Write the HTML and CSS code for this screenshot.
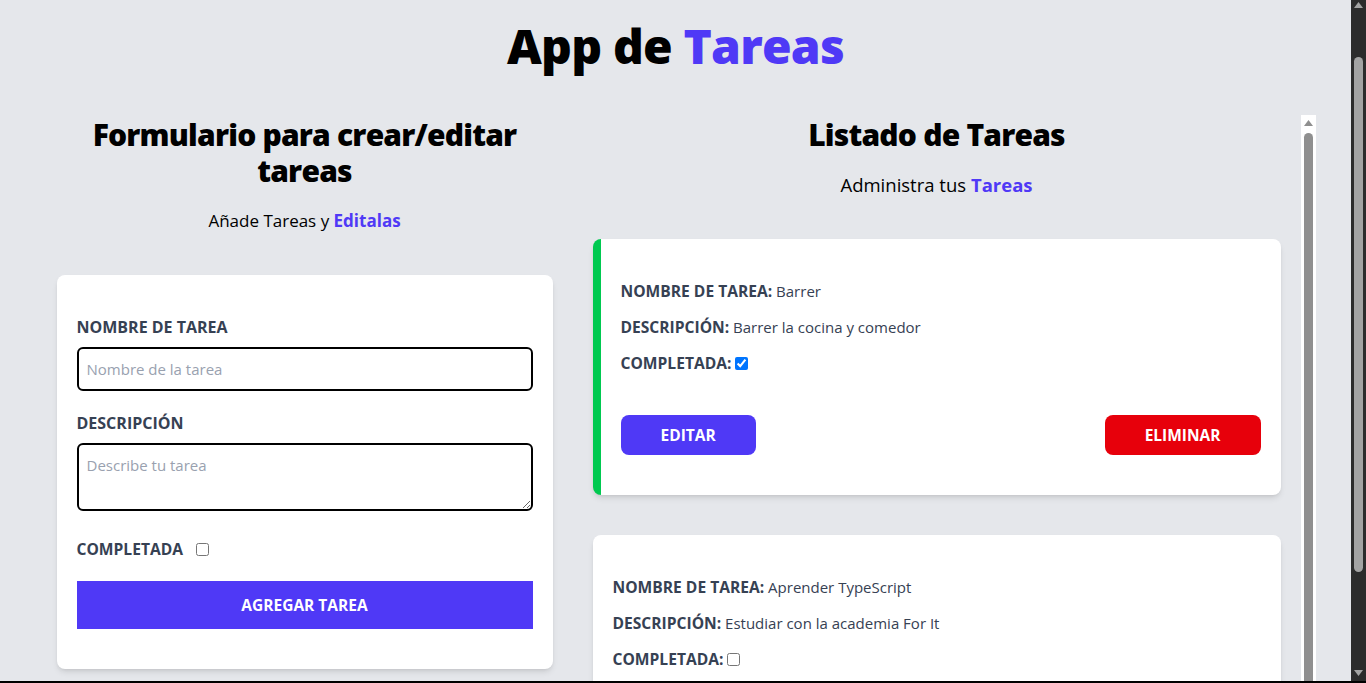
FILE: index.html
```html
<!DOCTYPE html>
<html lang="es">
<head>
<meta charset="utf-8">
<title>App de Tareas</title>
<link rel="stylesheet" href="styles.css">
</head>
<body>
<h1 class="title">App de <span class="accent">Tareas</span></h1>
<main class="layout">
  <section class="form-col">
    <h2 class="col-title">Formulario para crear/editar tareas</h2>
    <p class="col-sub">Añade Tareas y <span class="accent-bold">Editalas</span></p>
    <form class="card form-card">
      <div class="field">
        <label class="field-label" for="nombre">Nombre de tarea</label>
        <input class="field-input" id="nombre" type="text" placeholder="Nombre de la tarea">
      </div>
      <div class="field">
        <label class="field-label" for="descripcion">Descripción</label>
        <textarea class="field-textarea" id="descripcion" rows="2" placeholder="Describe tu tarea"></textarea>
      </div>
      <div class="field check-field">
        <label class="field-label inline" for="completada">Completada</label>
        <input class="check" id="completada" type="checkbox">
      </div>
      <button class="submit" type="button">Agregar tarea</button>
    </form>
  </section>
  <div class="list-wrap">
    <section class="list-col">
      <h2 class="col-title">Listado de Tareas</h2>
      <p class="col-sub col-sub-list">Administra tus <span class="accent-bold">Tareas</span></p>
      <article class="task-card done">
        <p class="task-line"><strong>Nombre de tarea:</strong> Barrer</p>
        <p class="task-line"><strong>Descripción:</strong> Barrer la cocina y comedor</p>
        <p class="task-line"><strong>Completada:</strong><input class="check" type="checkbox" checked></p>
        <div class="task-actions">
          <button class="btn btn-edit" type="button">Editar</button>
          <button class="btn btn-delete" type="button">Eliminar</button>
        </div>
      </article>
      <article class="task-card">
        <p class="task-line"><strong>Nombre de tarea:</strong> Aprender TypeScript</p>
        <p class="task-line"><strong>Descripción:</strong> Estudiar con la academia For It</p>
        <p class="task-line"><strong>Completada:</strong><input class="check" type="checkbox"></p>
        <div class="task-actions">
          <button class="btn btn-edit" type="button">Editar</button>
          <button class="btn btn-delete" type="button">Eliminar</button>
        </div>
      </article>
    </section>
    <div class="inner-scrollbar" aria-hidden="true">
      <svg class="inner-arrow" width="9" height="6" viewBox="0 0 9 6"><polygon points="4.5,0 9,6 0,6" fill="#8f8f8f"/></svg>
      <div class="inner-thumb"></div>
    </div>
  </div>
</main>
<div class="page-scrollbar" aria-hidden="true">
  <svg class="page-arrow up" width="9" height="6" viewBox="0 0 9 6"><polygon points="4.5,0 9,6 0,6" fill="#a3a3a3"/></svg>
  <div class="page-thumb"></div>
  <svg class="page-arrow down" width="9" height="6" viewBox="0 0 9 6"><polygon points="0,0 9,0 4.5,6" fill="#a3a3a3"/></svg>
</div>
<div class="frame-edge" aria-hidden="true"></div>
</body>
</html>
```
FILE: styles.css
```css
* { box-sizing: border-box; }

html { margin: 0; }

body {
  margin: 0 15px 0 0;
  background: #e5e7eb;
  color: #000;
  font-family: "Open Sans", "Noto Sans", sans-serif;
  font-size: 15px;
  line-height: 24px;
  padding-bottom: 10px;
}

.title {
  margin: 22px 0 0;
  padding-bottom: 1px;
  font-family: "Open Sans", sans-serif;
  font-size: 48px;
  line-height: 48px;
  font-weight: 800;
  letter-spacing: -0.8px;
  text-align: center;
}

.accent { color: #4f39f6; }
.accent-bold { color: #4f39f6; font-weight: 700; }

.layout {
  display: flex;
  width: 1280px;
  margin: 44px auto 0;
  padding-left: 21px;
}

.form-col {
  flex: 0 0 496px;
}

.list-wrap {
  flex: 1 1 auto;
  position: relative;
}

.list-col {
  height: 683px;
  overflow-y: auto;
  padding: 0 35px 0 40px;
}

.col-title {
  margin: 2px 0 0;
  font-family: "Open Sans", sans-serif;
  font-size: 30px;
  line-height: 36px;
  font-weight: 800;
  letter-spacing: -0.8px;
  text-align: center;
}

.col-sub {
  margin: 18px 0 40px;
  font-size: 17px;
  line-height: 28px;
  text-align: center;
}

.col-sub-list {
  font-size: 18.5px;
}

.card {
  background: #fff;
  border-radius: 8px;
  box-shadow: 0 4px 6px -1px rgba(0,0,0,.1), 0 2px 4px -2px rgba(0,0,0,.1);
}

.form-card {
  padding: 40px 20px;
}

.field { margin-bottom: 20px; }

.field-label {
  display: block;
  margin-bottom: 8px;
  color: #364153;
  font-size: 16px;
  font-weight: 700;
  text-transform: uppercase;
}

.field-label.inline {
  display: inline-block;
  margin: 0 9px 0 0;
  font-size: 15.6px;
}

.check-field {
  display: flex;
  align-items: center;
  padding-top: 6px;
}

.field-input,
.field-textarea {
  display: block;
  width: 100%;
  border: 2px solid #000;
  border-radius: 6px;
  padding: 8px;
  font-family: inherit;
  font-size: 15px;
  line-height: 24px;
  color: #000;
  background: #fff;
}

.field-input { height: 44px; }

.field-textarea {
  height: 68px;
  resize: vertical;
}

.field-input::placeholder,
.field-textarea::placeholder { color: #99a1af; }

.check {
  width: 13px;
  height: 13px;
  margin: 0 0 0 4px;
  vertical-align: -1px;
}

.submit {
  display: block;
  width: 100%;
  border: 0;
  padding: 12px;
  background: #4f39f6;
  color: #fff;
  font-family: inherit;
  font-size: 15.5px;
  line-height: 24px;
  font-weight: 700;
  text-transform: uppercase;
}

.task-card {
  background: #fff;
  border-radius: 8px;
  box-shadow: 0 4px 6px -1px rgba(0,0,0,.1), 0 2px 4px -2px rgba(0,0,0,.1);
  padding: 40px 20px;
  margin-bottom: 40px;
}

.task-card.done { border-left: 8px solid #00c950; }

.task-line {
  margin: 0 0 12px;
  color: #364153;
}

.task-line:last-of-type { margin-bottom: 0; }

.task-line strong {
  font-size: 15.6px;
  font-weight: 700;
  text-transform: uppercase;
}

.task-actions {
  display: flex;
  justify-content: space-between;
  margin-top: 40px;
}

.btn {
  border: 0;
  border-radius: 8px;
  padding: 8px 40px;
  color: #fff;
  font-family: inherit;
  font-size: 15.5px;
  line-height: 24px;
  font-weight: 700;
  text-transform: uppercase;
}

.btn-edit { background: #4f39f6; }
.btn-delete { background: #e7000b; }

/* drawn scrollbar of the task list */
.inner-scrollbar {
  position: absolute;
  top: 0;
  right: 0;
  width: 15px;
  height: 683px;
  background: #fff;
  display: flex;
  flex-direction: column;
  align-items: center;
  padding-top: 5px;
}

.inner-arrow { display: block; }

.inner-thumb {
  width: 9px;
  height: 620px;
  margin-top: 7px;
  border-radius: 5px;
  background: #8f8f8f;
}

/* drawn page scrollbar */
.page-scrollbar {
  position: fixed;
  top: 0;
  right: 0;
  width: 15px;
  height: 100%;
  background: #2c2c2c;
  display: flex;
  flex-direction: column;
  align-items: center;
}

.page-arrow { display: block; }
.page-arrow.up { margin-top: 2px; }

.page-thumb {
  width: 9px;
  height: 515px;
  margin: 49px 0 0;
  border-radius: 5px;
  background: #a3a3a3;
}

.page-arrow.down { margin-top: auto; margin-bottom: 7px; }

.frame-edge {
  position: fixed;
  left: 0;
  right: 0;
  bottom: 0;
  height: 2px;
  background: #000;
}
```
